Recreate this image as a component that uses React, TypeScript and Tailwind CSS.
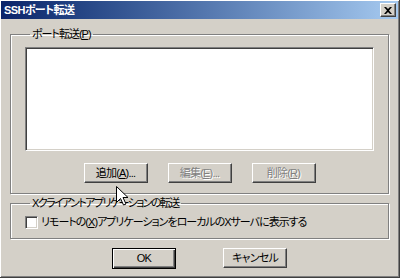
import React from 'react';

const font = "font-['Liberation_Sans','Noto_Sans_CJK_JP',sans-serif] [font-feature-settings:'palt']";

function Button({ label, disabled, primary }: { label: React.ReactNode; disabled?: boolean; primary?: boolean }) {
  const base =
    'flex items-center justify-center w-[64px] bg-[#d4d0c8] text-[11px] leading-none tracking-[-0.8px]';
  if (primary) {
    return (
      <div
        className={`${base} h-[21px] border border-black shadow-[inset_1px_1px_0_#fff,inset_-1px_-1px_0_#404040,inset_-2px_-2px_0_#808080]`}
      >
        {label}
      </div>
    );
  }
  return (
    <div
      className={`${base} h-[20px] border border-t-white border-l-white border-r-[#404040] border-b-[#404040] shadow-[inset_-1px_-1px_0_#808080] ${
        disabled ? 'text-[#808080] [text-shadow:1px_1px_0_#fff]' : 'text-black'
      }`}
    >
      {label}
    </div>
  );
}

function Group({ title, children, className, legendClass }: { title: React.ReactNode; children: React.ReactNode; className?: string; legendClass?: string }) {
  return (
    <fieldset
      className={`border border-[#808080] shadow-[1px_1px_0_#fff,inset_1px_1px_0_#fff] mx-[10px] ${className ?? ''}`}
    >
      <legend className={`ml-[5px] px-[2px] text-[11px] leading-[14px] ${legendClass ?? ''}`}>{title}</legend>
      {children}
    </fieldset>
  );
}

export default function App() {
  return (
    <div
      className={`relative w-[400px] h-[278px] bg-[#d4d0c8] text-black flex flex-col border-r border-b border-r-[#404040] border-b-[#404040] shadow-[inset_1px_1px_0_#fff,inset_-1px_-1px_0_#808080] overflow-hidden ${font}`}
    >
      {/* Title bar */}
      <div className="mt-[1px] mx-[1px] h-[18px] flex items-center justify-between bg-gradient-to-r from-[#0a246a] to-[#a6caf0] pl-[3px] pr-[2px]">
        <span className="text-white font-bold text-[11px] leading-none tracking-[-0.6px]">SSHポート転送</span>
        <div className="w-[16px] h-[14px] bg-[#d4d0c8] border border-t-white border-l-white border-r-[#404040] border-b-[#404040] shadow-[inset_-1px_-1px_0_#808080] flex items-center justify-center">
          <svg width="8" height="7" viewBox="0 0 8 7">
            <path d="M0 0h2l2 2 2-2h2L5 3.5 8 7H6L4 5 2 7H0l3-3.5z" fill="#000" />
          </svg>
        </div>
      </div>

      {/* Port forwarding group */}
      <Group title={<>ポート転送(<u>P</u>)</>} className="mt-[8px] px-[14px] pb-[10px]" legendClass="tracking-[-1px]">
        <div className="mt-[6px] h-[104px] bg-white border border-t-[#808080] border-l-[#808080] border-r-white border-b-white shadow-[inset_1px_1px_0_#404040,inset_-1px_-1px_0_#d4d0c8]" />
        <div className="mt-[12px] flex justify-center gap-[20px]">
          <Button label={<>追加(<u>A</u>)...</>} />
          <Button label={<>編集(<u>E</u>)...</>} disabled />
          <Button label={<>削除(<u>R</u>)</>} disabled />
        </div>
      </Group>

      {/* X client group */}
      <Group title="Xクライアントアプリケーションの転送" className="mt-[2px] px-[14px] pb-[9px]" legendClass="tracking-[-1.6px]">
        <div className="mt-[6px] flex items-center gap-[3px] text-[11px] leading-none">
          <div className="w-[13px] h-[13px] bg-white border border-t-[#808080] border-l-[#808080] border-r-white border-b-white shadow-[inset_1px_1px_0_#404040,inset_-1px_-1px_0_#d4d0c8]" />
          <span className="tracking-[-1px]">
            リモートの(<u>X</u>)アプリケーションをローカルのXサーバに表示する
          </span>
        </div>
      </Group>

      {/* Dialog buttons */}
      <div className="mt-[9px] flex justify-center gap-[47px]">
        <Button label="OK" primary />
        <Button label="キャンセル" />
      </div>

      {/* Mouse cursor */}
      <svg className="absolute left-[116px] top-[186px]" width="13" height="20" viewBox="0 0 13 20">
        <path d="M0.5 0.5V16.5L4.5 12.5L7.5 19L10 18L7 11.5H12Z" fill="#fff" stroke="#000" strokeWidth="1" strokeLinejoin="miter" />
      </svg>
    </div>
  );
}
